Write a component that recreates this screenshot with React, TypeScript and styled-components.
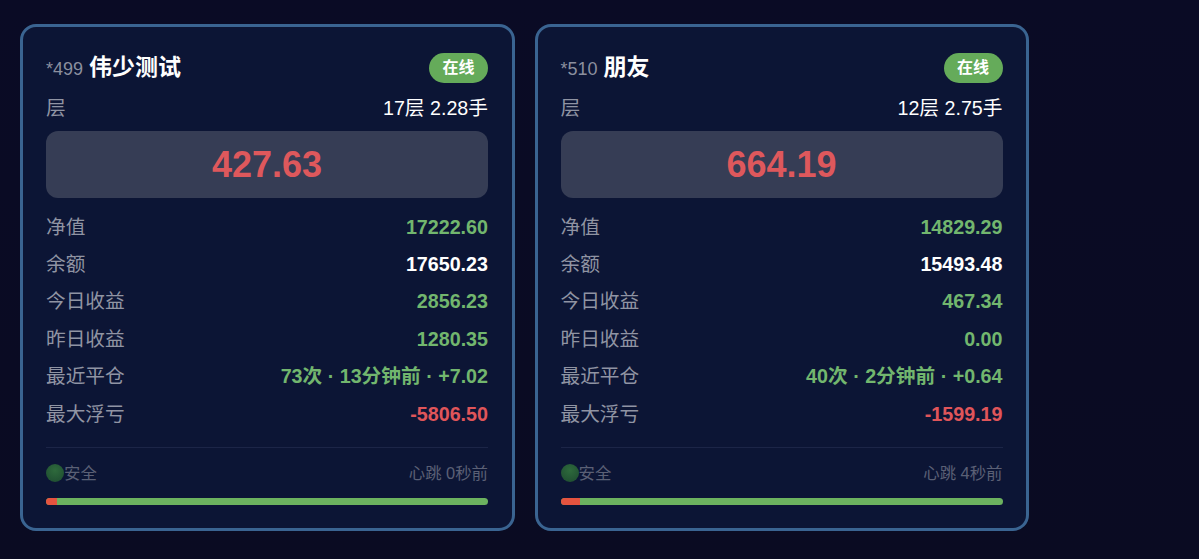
import React from "react";
import styled, { createGlobalStyle } from "styled-components";

const GlobalStyle = createGlobalStyle`
  html, body {
    margin: 0;
    padding: 0;
    height: 100%;
    background: #0a0b22;
    font-family: "Liberation Sans", "Noto Sans CJK SC", sans-serif;
  }
`;

const Page = styled.div`
  display: flex;
  align-items: flex-start;
  gap: 20px;
  box-sizing: border-box;
  height: 559px;
  overflow: hidden;
  padding: 24px 20px 0;
  background: linear-gradient(180deg, #0a0b25 0%, #0a0b22 100%);
`;

const Card = styled.div`
  box-sizing: border-box;
  width: 494.5px;
  height: 507px;
  padding: 25.5px 23.5px 0 23px;
  border: 3px solid #3a6491;
  border-radius: 16px;
  background: #0c1535;
`;

const Header = styled.div`
  display: flex;
  justify-content: space-between;
  align-items: center;
  height: 30px;
  line-height: 30px;
`;

const Title = styled.div`
  display: flex;
  align-items: baseline;
  gap: 6px;
`;

const Account = styled.span`
  font-size: 18px;
  color: #8b8f9f;
`;

const Name = styled.span`
  font-size: 23px;
  font-weight: 700;
  color: #ffffff;
`;

const Badge = styled.span`
  display: flex;
  justify-content: center;
  align-items: center;
  width: 59px;
  height: 30px;
  border-radius: 15px;
  background: #65ab5a;
  color: #ffffff;
  font-size: 16px;
  font-weight: 700;
`;

const Row = styled.div`
  display: flex;
  justify-content: space-between;
  align-items: center;
  height: 37.4px;
  line-height: 24px;
  font-size: 19.7px;
  color: #9094a3;
`;

const Value = styled.span<{ $tone: "plain" | "white" | "green" | "red" }>`
  font-weight: ${(p) => (p.$tone === "plain" ? 400 : 700)};
  color: ${(p) =>
    p.$tone === "green"
      ? "#72b66e"
      : p.$tone === "red"
        ? "#e0555a"
        : "#ffffff"};
`;

const TopRow = styled(Row)`
  height: 34px;
  margin-top: 8px;
`;

const Hero = styled.div`
  display: flex;
  justify-content: center;
  align-items: center;
  height: 67px;
  margin: 6.5px 0 10px;
  border-radius: 12px;
  background: #363d55;
  color: #de585c;
  font-size: 36px;
  font-weight: 700;
`;

const Footer = styled.div`
  display: flex;
  justify-content: space-between;
  align-items: center;
  height: 50px;
  margin-top: 14.5px;
  border-top: 1px solid #1c2547;
  line-height: 20px;
  font-size: 16.4px;
  color: #5b6075;
`;

const Safety = styled.span`
  display: flex;
  align-items: center;
`;

const Dot = styled.span`
  width: 18px;
  height: 18px;
  border-radius: 50%;
  background: radial-gradient(circle at 50% 35%, #2e6a3c, #1d4a30);
`;

const Bar = styled.div`
  display: flex;
  height: 7px;
  border-radius: 4px;
  overflow: hidden;
  background: #6cb25f;
`;

const BarRisk = styled.div`
  background: #e5533f;
`;

type Stat = { label: string; value: string; tone: "white" | "green" | "red" };

type AccountData = {
  id: string;
  name: string;
  layers: string;
  profit: string;
  stats: Stat[];
  heartbeat: string;
  risk: number;
};

const accounts: AccountData[] = [
  {
    id: "*499",
    name: "伟少测试",
    layers: "17层 2.28手",
    profit: "427.63",
    stats: [
      { label: "净值", value: "17222.60", tone: "green" },
      { label: "余额", value: "17650.23", tone: "white" },
      { label: "今日收益", value: "2856.23", tone: "green" },
      { label: "昨日收益", value: "1280.35", tone: "green" },
      { label: "最近平仓", value: "73次 · 13分钟前 · +7.02", tone: "green" },
      { label: "最大浮亏", value: "-5806.50", tone: "red" },
    ],
    heartbeat: "心跳 0秒前",
    risk: 2.5,
  },
  {
    id: "*510",
    name: "朋友",
    layers: "12层 2.75手",
    profit: "664.19",
    stats: [
      { label: "净值", value: "14829.29", tone: "green" },
      { label: "余额", value: "15493.48", tone: "white" },
      { label: "今日收益", value: "467.34", tone: "green" },
      { label: "昨日收益", value: "0.00", tone: "green" },
      { label: "最近平仓", value: "40次 · 2分钟前 · +0.64", tone: "green" },
      { label: "最大浮亏", value: "-1599.19", tone: "red" },
    ],
    heartbeat: "心跳 4秒前",
    risk: 4.3,
  },
];

export default function App() {
  return (
    <Page>
      <GlobalStyle />
      {accounts.map((a) => (
        <Card key={a.id}>
          <Header>
            <Title>
              <Account>{a.id}</Account>
              <Name>{a.name}</Name>
            </Title>
            <Badge>在线</Badge>
          </Header>
          <TopRow>
            <span>层</span>
            <Value $tone="plain">{a.layers}</Value>
          </TopRow>
          <Hero>{a.profit}</Hero>
          {a.stats.map((s) => (
            <Row key={s.label}>
              <span>{s.label}</span>
              <Value $tone={s.tone}>{s.value}</Value>
            </Row>
          ))}
          <Footer>
            <Safety>
              <Dot />
              安全
            </Safety>
            <span>{a.heartbeat}</span>
          </Footer>
          <Bar>
            <BarRisk style={{ width: `${a.risk}%` }} />
          </Bar>
        </Card>
      ))}
    </Page>
  );
}
